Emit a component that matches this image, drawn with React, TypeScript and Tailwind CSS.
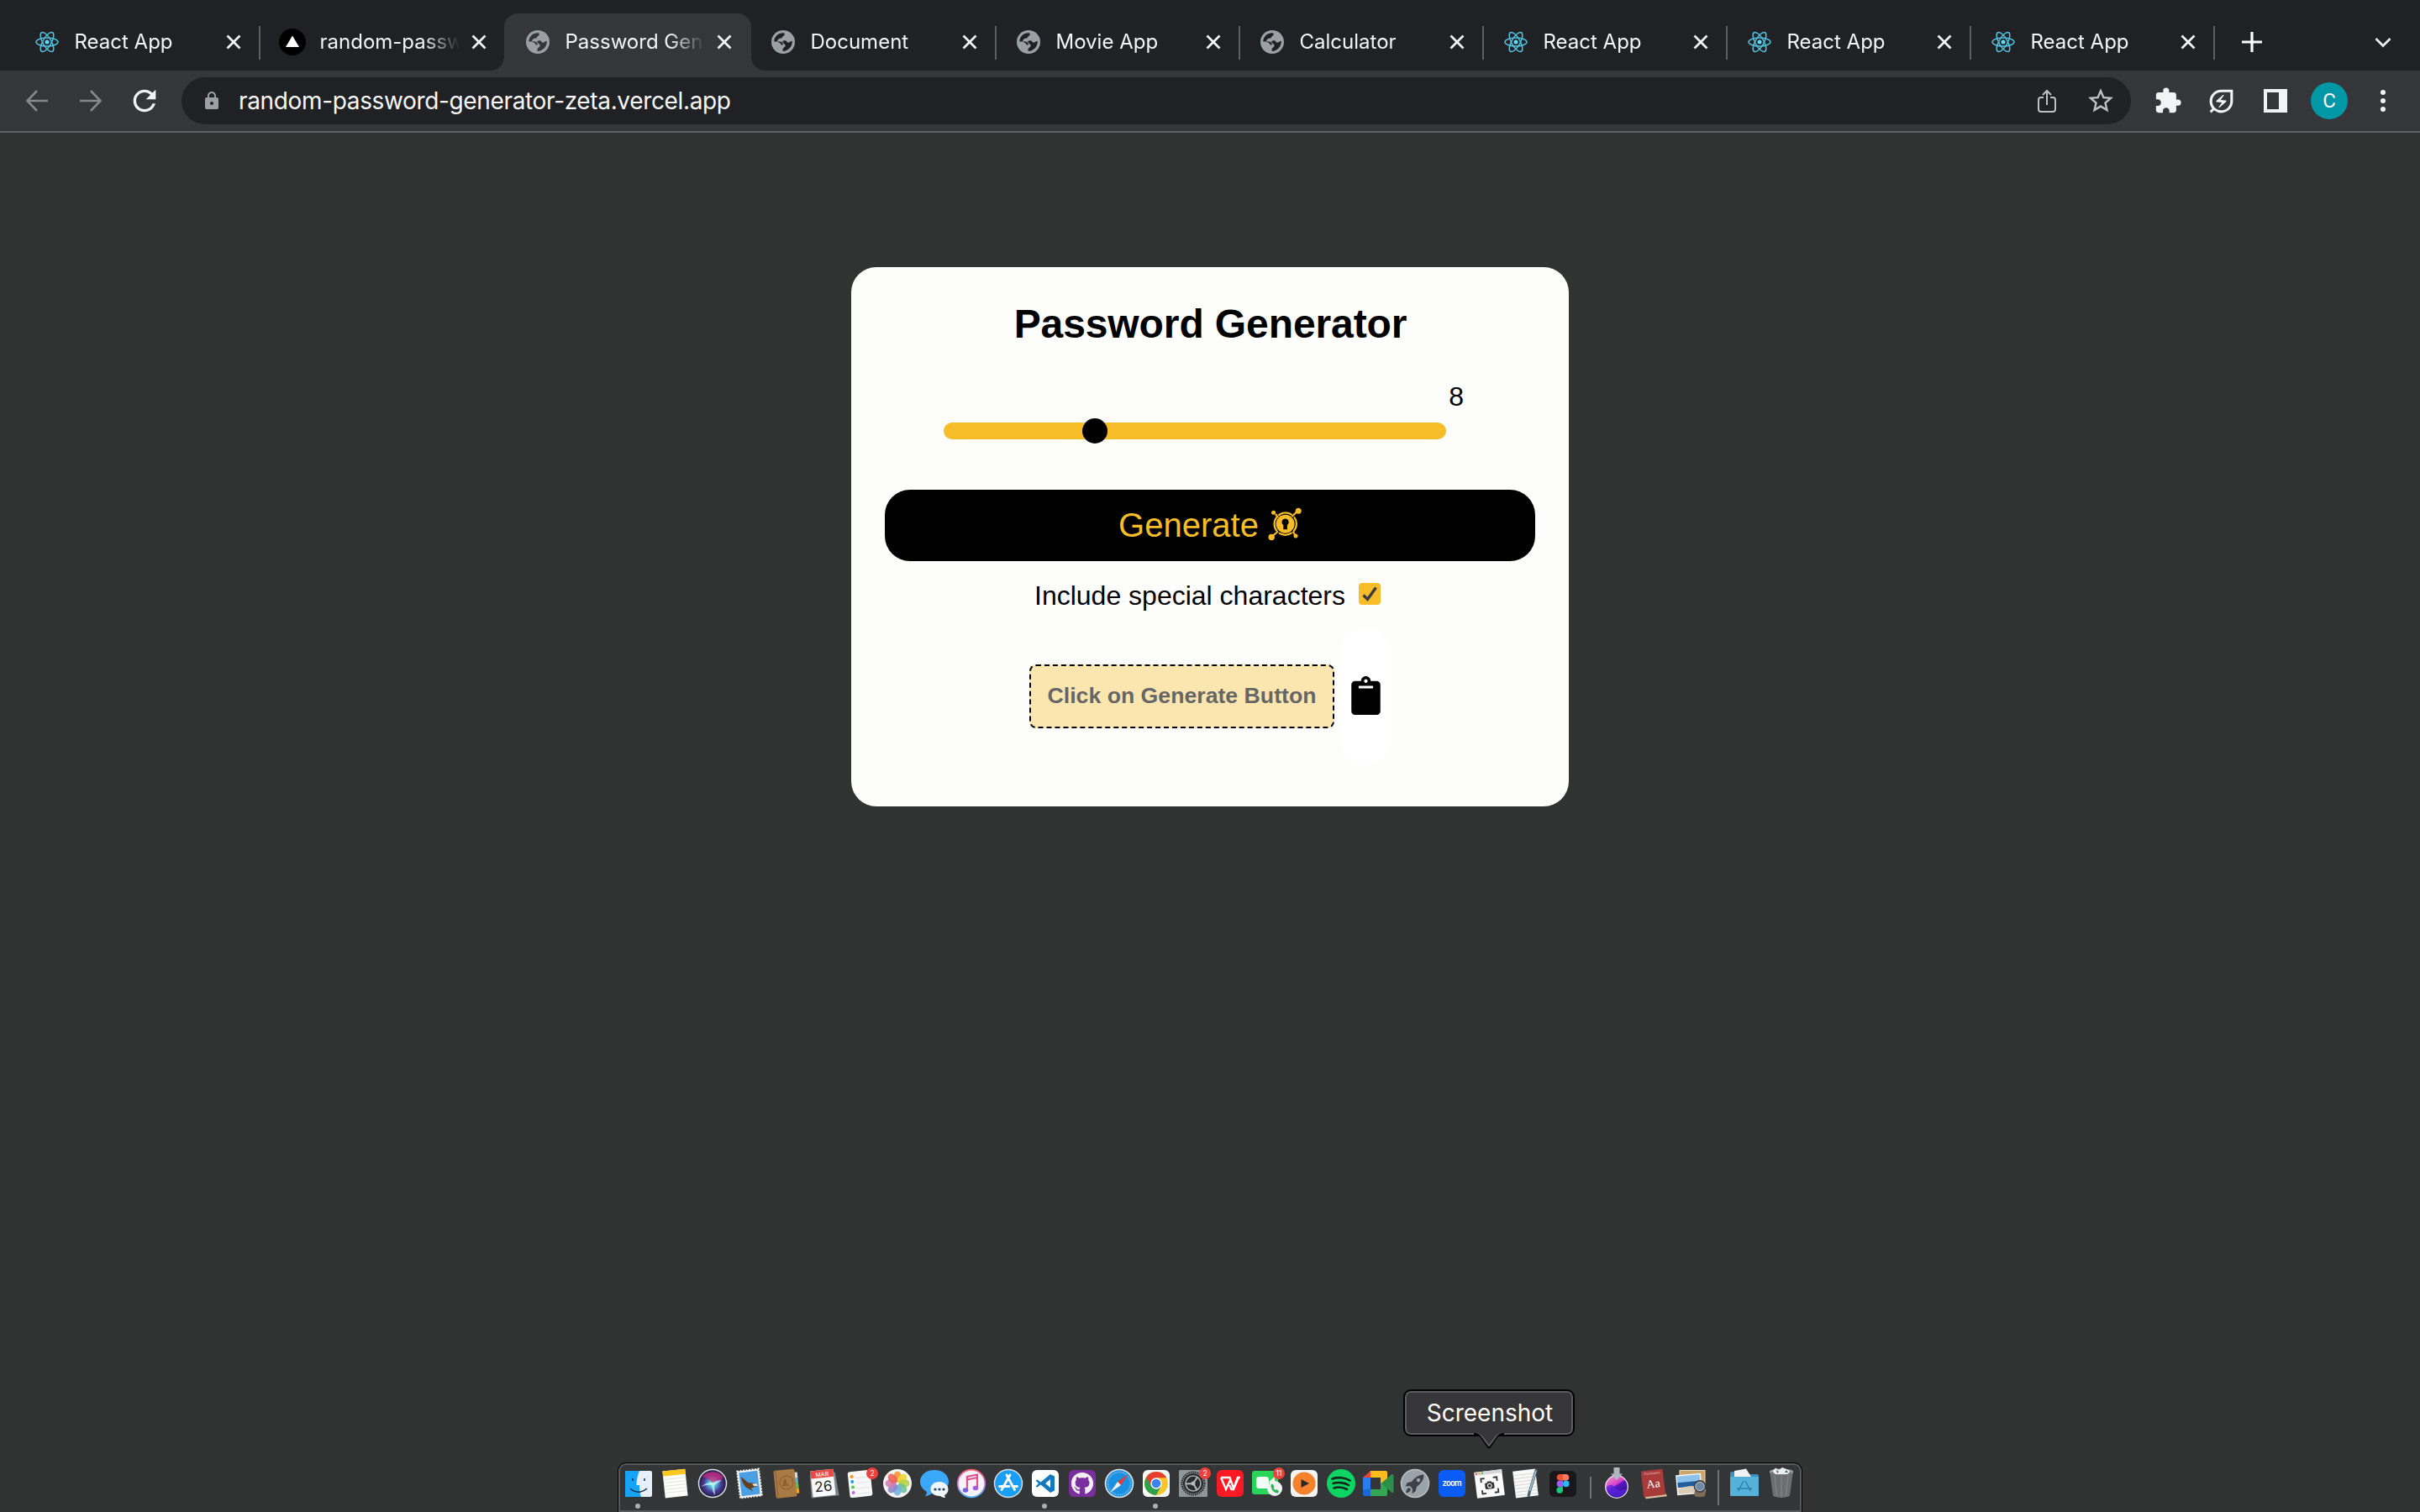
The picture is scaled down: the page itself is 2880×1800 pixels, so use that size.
import type { ReactNode } from "react";
import {
  MdExtension,
  MdLock,
  MdOutlineEnergySavingsLeaf,
  MdRefresh,
  MdStarBorder,
} from "react-icons/md";
import { FaGithub } from "react-icons/fa";

const UI = "font-['Inter',sans-serif]";

/* ---------- Browser chrome ---------- */

function ReactIcon() {
  return (
    <svg viewBox="0 0 28 28" className="h-7 w-7" fill="none" stroke="#53c1de" strokeWidth="1.5">
      <ellipse cx="14" cy="14" rx="13" ry="5" />
      <ellipse cx="14" cy="14" rx="13" ry="5" transform="rotate(60 14 14)" />
      <ellipse cx="14" cy="14" rx="13" ry="5" transform="rotate(120 14 14)" />
      <circle cx="14" cy="14" r="2.5" fill="#61dafb" stroke="none" />
    </svg>
  );
}

function VercelIcon() {
  return (
    <svg viewBox="0 0 32 32" className="-mx-0.5 h-8 w-8">
      <circle cx="16" cy="16" r="16" fill="#000" />
      <path d="M16 8.5 24 22H8z" fill="#fff" />
    </svg>
  );
}

function GlobeIcon({ hole }: { hole: string }) {
  return (
    <svg viewBox="0 0 28 28" className="h-7 w-7">
      <circle cx="14" cy="14" r="14" fill="#9aa0a6" />
      <path
        d="M15 3.200C9 2.600 3.600 6.800 3.200 13.500H9.500C12.500 13.500 13.800 15 13.800 17.500 13 17.600 12 17.500 11.500 17.200 11 15.500 10.500 15 9 14.800L7 13.500C7.500 10.500 9 9.800 11.500 9.600 13.200 9.400 13 7.500 14 7 15.500 6.300 16.500 5 15 3.200Z"
        fill={hole}
      />
      <path
        d="M24.900 13.200C24.800 19.500 20 24.700 13.600 25V22.300C13.600 21 16.800 20.500 16.600 18 16.500 16 14.500 16.500 13.500 14.500 12.500 12.500 15 11.800 17.200 12.400 18.500 13 18.500 14.600 20 14.800 21.500 15 23 12.600 24.900 13.200Z"
        fill={hole}
      />
    </svg>
  );
}

function CloseIcon() {
  return (
    <svg viewBox="0 0 20 20" className="h-5 w-5" stroke="#f5f6f7" strokeWidth="2.7">
      <path d="M2.500 2.500 17.500 17.500M17.500 2.500 2.500 17.500" />
    </svg>
  );
}

type TabData = {
  title: string;
  icon: "react" | "vercel" | "globe";
  wide?: boolean;
  active?: boolean;
  line?: boolean;
};

const tabs: TabData[] = [
  { title: "React App", icon: "react", wide: true },
  { title: "random-passw", icon: "vercel", wide: true, line: true },
  { title: "Password Gene", icon: "globe", active: true },
  { title: "Document", icon: "globe", wide: true },
  { title: "Movie App", icon: "globe", line: true },
  { title: "Calculator", icon: "globe", line: true },
  { title: "React App", icon: "react", line: true },
  { title: "React App", icon: "react", line: true },
  { title: "React App", icon: "react", line: true },
];

function Tab({ tab }: { tab: TabData }) {
  return (
    <div
      className={`relative flex h-[68px] shrink-0 items-center pl-[26px] ${
        tab.active
          ? "z-10 -mr-0.5 w-[294px] rounded-t-2xl bg-[#35363a] pr-[22px] before:absolute before:bottom-0 before:-left-4 before:h-4 before:w-4 before:bg-[radial-gradient(circle_at_0_0,transparent_15.5px,#35363a_16px)] after:absolute after:-right-4 after:bottom-0 after:h-4 after:w-4 after:bg-[radial-gradient(circle_at_100%_0,transparent_15.5px,#35363a_16px)]"
          : tab.wide
            ? "w-[292px] pr-5"
            : "w-[290px] pr-5"
      }`}
    >
      {tab.line && <span className="absolute top-[15px] left-0 h-10 w-0.5 bg-[#5b5e63]" />}
      {tab.icon === "react" && <ReactIcon />}
      {tab.icon === "vercel" && <VercelIcon />}
      {tab.icon === "globe" && <GlobeIcon hole={tab.active ? "#35363a" : "#202124"} />}
      <span className="ml-[18.5px] w-0 flex-1 [mask-image:linear-gradient(to_right,#000_122px,transparent_166px)] text-2xl whitespace-nowrap text-[#f3f4f5]">
        {tab.title}
      </span>
      <span className="ml-3">
        <CloseIcon />
      </span>
    </div>
  );
}

function TabStrip() {
  return (
    <div className="flex h-[84px] items-end bg-[#202124] pl-4">
      {tabs.map((tab, i) => (
        <Tab key={i} tab={tab} />
      ))}
      <div className="relative flex h-[68px] flex-1 items-center justify-between pr-[34px] pl-[34px]">
        <span className="absolute top-[15px] left-0 h-10 w-0.5 bg-[#5b5e63]" />
        <svg viewBox="0 0 24 24" className="h-6 w-6" stroke="#fff" strokeWidth="3.2">
          <path d="M12 0V24M0 12H24" />
        </svg>
        <svg viewBox="0 0 20 20" className="h-5 w-5" fill="none" stroke="#e8eaed" strokeWidth="2.8">
          <path d="M1.500 6 10 14.500 18.500 6" />
        </svg>
      </div>
    </div>
  );
}

function Toolbar() {
  return (
    <div className="flex h-[74px] items-center border-b-2 border-[#5e5f62] bg-[#35363a] pl-[30px]">
      <svg viewBox="0 0 28 28" className="h-7 w-7" fill="none" stroke="#87888b" strokeWidth="2.6">
        <path d="M27 14H3M14 2 2.500 14 14 26" />
      </svg>
      <svg viewBox="0 0 28 28" className="ml-9 h-7 w-7" fill="none" stroke="#87888b" strokeWidth="2.600">
        <path d="M1 14H25M14 2 25.500 14 14 26" />
      </svg>
      <MdRefresh className="ml-[30px] h-10 w-10 text-[#f1f3f4]" />
      <div className="ml-6 flex h-14 w-[2320px] items-center rounded-full bg-[#202124] pr-4 pl-6">
        <MdLock className="h-6 w-6 text-[#9aa0a6]" />
        <span className="ml-5 flex-1 text-[28px] leading-none tracking-[-0.35px] text-[#f7f8f9]">
          random-password-generator-zeta.vercel.app
        </span>
        <svg viewBox="0 0 24 30" className="h-[30px] w-6" fill="none" stroke="#bdc1c4" strokeWidth="2">
          <path d="M8 11H5Q2 11 2 14V25Q2 28 5 28H19Q22 28 22 25V14Q22 11 19 11H16M12 20V3M7 8 12 3 17 8" />
        </svg>
        <MdStarBorder className="mr-0.5 ml-[34px] h-9 w-9 text-[#bdc1c4]" />
      </div>
      <MdExtension className="ml-[27px] h-[34px] w-[34px] text-[#f1f3f4]" />
      <MdOutlineEnergySavingsLeaf className="ml-7 h-[37px] w-[37px] text-[#f1f3f4]" />
      <svg viewBox="0 0 28 28" className="ml-8 h-7 w-7">
        <path d="M0 0H28V28H0zM4 4V24H18V4z" fill="#f1f3f4" fillRule="evenodd" />
      </svg>
      <span className="ml-7 flex h-11 w-11 items-center justify-center rounded-full bg-[#0097a7] font-['Roboto',sans-serif] text-2xl text-white">
        C
      </span>
      <span className="ml-[39px] flex flex-col gap-1">
        <i className="h-1.5 w-1.5 rounded-full bg-[#f1f3f4]" />
        <i className="h-1.5 w-1.5 rounded-full bg-[#f1f3f4]" />
        <i className="h-1.5 w-1.5 rounded-full bg-[#f1f3f4]" />
      </span>
    </div>
  );
}

/* ---------- Page card ---------- */

function KeyholeIcon() {
  return (
    <svg viewBox="0 0 40 40" className="h-10 w-10" fill="#f7bd29">
      <g stroke="#f7bd29" strokeWidth="2.200" fill="none">
        <path d="M9 8 12 12M34 5.500 28.500 11M5 34.500 12 28.500M29.500 28.500 32.500 33.500" />
        <path d="M12.300 9.600A13.200 13.200 0 0 1 28.600 9M31 11.400A13.200 13.200 0 0 1 30.500 28.500M28.500 30.200A13.200 13.200 0 0 1 13 30.400M10.600 28.300A13.200 13.200 0 0 1 10.600 11.400" />
      </g>
      <circle cx="6.600" cy="6.200" r="2.500" />
      <circle cx="36.200" cy="4.200" r="3.500" />
      <circle cx="4.200" cy="35.500" r="3.700" />
      <circle cx="33" cy="34" r="2.500" />
      <circle cx="20.600" cy="19.800" r="11" />
      <path d="M20.600 13.600a4 4 0 0 1 2.300 7.300V26.200h-4.600V20.900a4 4 0 0 1 2.300-7.300z" fill="#000" />
    </svg>
  );
}

function Card() {
  return (
    <div className="flex h-[642px] w-[854px] flex-col items-center rounded-[30px] bg-[#fdfdfb] pt-10 font-['Liberation_Sans',Arial,sans-serif] text-black">
      <h1 className="pl-px text-[48px] leading-[56px] font-bold tracking-[-0.1px]">Password Generator</h1>
      <div className="mt-10 ml-[110px] w-[598px] self-start">
        <div className="-mr-[21px] text-right text-[32px] leading-9">8</div>
        <div className="mt-[13px] flex h-5 items-center rounded-full bg-[#f7bd29] pl-[165px]">
          <span className="h-[30px] w-[30px] rounded-full bg-black" />
        </div>
      </div>
      <button className="mt-[60px] flex h-[85px] w-[774px] items-center justify-center gap-[11px] rounded-[30px] bg-black pb-[3px] text-[40px] leading-none text-[#f7bd29]">
        <span className="pt-px">Generate</span>
        <KeyholeIcon />
      </button>
      <div className="mt-[23px] flex h-9 items-start self-start pl-[218px] text-[32px] leading-9">
        <span>Include special characters</span>
        <svg viewBox="0 0 26 26" className="mt-[3px] ml-4 h-[26px] w-[26px]">
          <rect width="26" height="26" rx="4" fill="#f7bd29" />
          <path d="M5.500 14.500 10.500 19.500 20.500 5.500" fill="none" stroke="#3b3b3b" strokeWidth="3.400" />
        </svg>
      </div>
      <div className="mt-5 flex items-center gap-2">
        <div className="flex h-[76px] w-[363px] items-center justify-center rounded-lg border-2 border-dashed border-black bg-[#fce6b0] text-[26.670px] leading-none font-bold text-[#666]">
          <span className="pb-0.5 pl-px">Click on Generate Button</span>
        </div>
        <div className="flex h-[164px] w-[60px] items-center justify-center rounded-[30px] bg-white pb-0.5">
          <svg viewBox="0 0 384 512" className="h-[46px] w-[35px]">
            <path d="M384 112v352c0 26.510-21.490 48-48 48H48c-26.510 0-48-21.490-48-48V112c0-26.510 21.490-48 48-48h80c0-35.290 28.710-64 64-64s64 28.710 64 64h80c26.510 0 48 21.490 48 48zM192 40c-13.255 0-24 10.745-24 24s10.745 24 24 24 24-10.745 24-24-10.745-24-24-24m96 114v-20a6 6 0 0 0-6-6H102a6 6 0 0 0-6 6v20a6 6 0 0 0 6 6h180a6 6 0 0 0 6-6z" />
          </svg>
        </div>
      </div>
    </div>
  );
}

/* ---------- Dock ---------- */

function Art({ children }: { children: ReactNode }) {
  return (
    <svg viewBox="0 0 36 36" className="h-9 w-9 overflow-visible">
      {children}
    </svg>
  );
}

function Badge({ n }: { n: string }) {
  return (
    <g>
      <circle cx="32" cy="6" r="7" fill="#f0403a" />
      <text x="32" y="9" textAnchor="middle" fontSize="8.500" fill="#fff" fontFamily="Inter, sans-serif">
        {n}
      </text>
    </g>
  );
}

type DockItem = { name: string; dot?: boolean; art: ReactNode };

const petals = ["#f7962a", "#ecd735", "#b5d143", "#6fc196", "#6fb2e4", "#8d84c9", "#cf7db4", "#f0605a"];

const apps: DockItem[] = [
  {
    name: "Finder",
    dot: true,
    art: (
      <>
        <rect x="2" y="3" width="32" height="31" rx="2" fill="#e6effa" />
        <path d="M4 3H19C16.500 9 15.500 14 15.500 20H19C19 25 19.500 30 21 34H4Q2 34 2 32V5Q2 3 4 3Z" fill="#16a4f8" />
        <path d="M11 12V15M25 12V15M8 24C14 29.500 22 29.500 28 24" fill="none" stroke="#122a4a" strokeWidth="1.500" />
      </>
    ),
  },
  {
    name: "Notes",
    art: (
      <g transform="rotate(-6 18 18)">
        <rect x="4" y="2" width="27" height="32" fill="#fdfdfa" />
        <rect x="4" y="2" width="27" height="6" fill="#fcc81e" />
        <path d="M4 12H31M4 16H31M4 20H31M4 24H31M4 28H31" stroke="#dddddb" strokeWidth=".8" />
      </g>
    ),
  },
  {
    name: "Siri",
    art: (
      <>
        <defs>
          <radialGradient id="siri">
            <stop offset="0" stopColor="#f4ffff" />
            <stop offset=".25" stopColor="#57c3dd" />
            <stop offset=".6" stopColor="#4b3f9a" />
            <stop offset="1" stopColor="#20173f" />
          </radialGradient>
        </defs>
        <circle cx="18" cy="18" r="16.500" fill="url(#siri)" stroke="#dcdce2" strokeWidth="1.500" />
        <path d="M6 10C11 3 24 2 30 9 32 13 26 14 18 18 14 12 9 11 6 10Z" fill="#d3277b" opacity=".7" />
        <path d="M4 22Q12 16 18 17 23 14 29 14 24 18 20 20L21 32Q17 27 17.500 20 11 19 4 22Z" fill="#b9f6f4" opacity=".75" />
      </>
    ),
  },
  {
    name: "Mail",
    art: (
      <g transform="rotate(-7 18 18)">
        <rect x="5" y="2" width="26" height="32" fill="#f2f2ee" stroke="#f2f2ee" strokeWidth="2" strokeDasharray="2 1.500" />
        <rect x="7" y="4" width="22" height="28" fill="#4b9fe4" />
        <path d="M9 9C12 11 14 15 17 17L26 19 28 22 19 24 21 28 16 24C11 21 9 15 9 9Z" fill="#65401f" />
        <path d="M21 19 26 19 28 22 23 22Z" fill="#efe6d2" />
      </g>
    ),
  },
  {
    name: "Contacts",
    art: (
      <g transform="rotate(-6 18 18)">
        <rect x="27" y="6" width="5" height="7" fill="#dedede" />
        <rect x="27" y="13" width="5" height="6" fill="#58b5e8" />
        <rect x="27" y="19" width="5" height="6" fill="#66c04c" />
        <rect x="27" y="25" width="5" height="6" fill="#f4a428" />
        <rect x="4" y="1.500" width="25" height="33" rx="2" fill="#a97a43" />
        <path d="M6.500 2V34" stroke="#8f6432" strokeWidth="1.200" />
        <circle cx="18" cy="17" r="8" fill="none" stroke="#8b6232" strokeWidth="1.200" />
        <path d="M12 21Q15 18 15 14 18 11 18.500 14L18 18 22 21Z" fill="#8b6232" />
      </g>
    ),
  },
  {
    name: "Calendar",
    art: (
      <g transform="rotate(-6 18 18)">
        <path d="M3 6H33L35 34H2Z" fill="#7b8790" />
        <rect x="4" y="2" width="27" height="31" fill="#fbfbfb" />
        <rect x="4" y="2" width="27" height="9" fill="#ea4a43" />
        <text x="17.500" y="9.500" textAnchor="middle" fontSize="7" fill="#fff" fontFamily="Inter, sans-serif">
          MAR
        </text>
        <text x="17.500" y="27.500" textAnchor="middle" fontSize="17" fill="#222" fontFamily="Inter, sans-serif">
          26
        </text>
      </g>
    ),
  },
  {
    name: "Reminders",
    art: (
      <>
        <g transform="rotate(-6 18 18)">
          <rect x="4" y="3" width="27" height="31" rx="3" fill="#f8f8f8" />
          <circle cx="8.500" cy="9" r="2" fill="#fd8f1e" />
          <circle cx="8.500" cy="15" r="2" fill="#1fa0f6" />
          <circle cx="8.500" cy="21.500" r="2" fill="#4fcf4c" />
          <circle cx="8.500" cy="28" r="2" fill="#c36ae0" />
          <path d="M13 11H29M13 17H29M13 23.500H29M13 30H29" stroke="#dedede" strokeWidth=".8" />
        </g>
        <Badge n="2" />
      </>
    ),
  },
  {
    name: "Photos",
    art: (
      <>
        <circle cx="18" cy="18" r="17" fill="#f4f4f2" />
        {petals.map((c, i) => (
          <ellipse key={c} cx="18" cy="10" rx="4.800" ry="6.500" fill={c} opacity=".88" transform={`rotate(${i * 45} 18 18)`} />
        ))}
      </>
    ),
  },
  {
    name: "Messages",
    art: (
      <>
        <path d="M18 2C8 2 1 8 1 16 1 21 4 25 9 28 9 30 8 32 6.500 33 11 33 14 31 15 29.500 27 31 35 24 35 16 35 8 28 2 18 2Z" fill="#3ba7f8" />
        <path d="M24 16C17 16 13.500 20 13.500 25S18 33 25 33C27 34.500 29 35 31 35L30 32C33 30.500 34.500 28 34.500 25 34.500 20 30 16 24 16Z" fill="#eff6fc" />
        <g fill="#24456b">
          <circle cx="19" cy="25" r="1.600" />
          <circle cx="24" cy="25" r="1.600" />
          <circle cx="29" cy="25" r="1.600" />
        </g>
      </>
    ),
  },
  {
    name: "Music",
    art: (
      <>
        <defs>
          <linearGradient id="music" x1="0" y1="0" x2="0" y2="1">
            <stop offset="0" stopColor="#fa5a68" />
            <stop offset=".5" stopColor="#c66be6" />
            <stop offset="1" stopColor="#45b1f5" />
          </linearGradient>
        </defs>
        <circle cx="18" cy="18" r="16.300" fill="#f7f2f8" stroke="url(#music)" strokeWidth="1.800" />
        <path d="M13 26V10L25 7.500V23.500M13 13.500 25 11" fill="none" stroke="#e0508d" strokeWidth="2.200" />
        <ellipse cx="11" cy="26" rx="3.300" ry="2.700" fill="#6b62e8" />
        <ellipse cx="23" cy="23.500" rx="3.300" ry="2.700" fill="#a95be0" />
      </>
    ),
  },
  {
    name: "App Store",
    art: (
      <>
        <circle cx="18" cy="18" r="16.500" fill="#189ff5" stroke="#d5dde4" strokeWidth="1.500" />
        <path d="M16 8 25.500 25.500M20 8 10 25.500M7.500 21.500H19M23.500 21.500H28.500" stroke="#fff" strokeWidth="2.800" strokeLinecap="round" />
      </>
    ),
  },
  {
    name: "VS Code",
    dot: true,
    art: (
      <>
        <rect x="2" y="2" width="32" height="32" rx="6" fill="#fff" />
        <path d="M24 7 29 9.500V26.500L24 29 12.500 19.500 8.500 22.500 6.500 21.500 10 18 6.500 14.500 8.500 13.500 12.500 16.500ZM24 13 18 18 24 23Z" fill="#1279bd" fillRule="evenodd" />
      </>
    ),
  },
  {
    name: "GitHub Desktop",
    art: (
      <>
        <rect x="2" y="2" width="32" height="32" rx="6" fill="#7b2f9f" />
        <FaGithub x="4.500" y="4.500" size={27} color="#f3f0f6" />
      </>
    ),
  },
  {
    name: "Safari",
    art: (
      <>
        <circle cx="18" cy="18" r="16.500" fill="#1b8fe0" stroke="#dfe3e6" strokeWidth="1.600" />
        <circle cx="18" cy="18" r="13.500" fill="none" stroke="#9ed3f5" strokeWidth="2" strokeDasharray=".7 1.400" />
        <path d="M29 7 20 20 16 16Z" fill="#e83b37" />
        <path d="M7 29 16 16 20 20Z" fill="#f1efec" />
      </>
    ),
  },
  {
    name: "Chrome",
    dot: true,
    art: (
      <>
        <rect x="2" y="2" width="32" height="32" rx="6" fill="#fafafa" />
        <circle cx="18" cy="18" r="14" fill="#fbc62d" />
        <path d="M5.900 11A14 14 0 0 0 18 32L23.800 21.300 18 18Z" fill="#2da04d" />
        <path d="M5.900 11A14 14 0 0 1 30.300 11.300H18L12.200 21.300Z" fill="#e5402f" />
        <circle cx="18" cy="18" r="6.700" fill="#fff" />
        <circle cx="18" cy="18" r="5.300" fill="#3c82f0" />
      </>
    ),
  },
  {
    name: "System Preferences",
    art: (
      <>
        <rect x="1" y="2" width="34" height="32" rx="1.500" fill="#8f969b" />
        <circle cx="18" cy="18" r="13.500" fill="none" stroke="#202123" strokeWidth="2" strokeDasharray="1.500 1" />
        <circle cx="18" cy="18" r="12" fill="#292a2c" />
        <circle cx="18" cy="18" r="9" fill="none" stroke="#a8acaf" strokeWidth="1.600" />
        <path d="M18 18 10 14M18 18 26 14M18 18V27" stroke="#b6babd" strokeWidth="2" transform="rotate(-30 18 18)" />
        <circle cx="18" cy="18" r="2.500" fill="#b6babd" />
        <Badge n="2" />
      </>
    ),
  },
  {
    name: "WPS Office",
    art: (
      <>
        <rect x="2" y="2" width="32" height="32" rx="6" fill="#fb1a24" />
        <path d="M7 11H17.500L22 24 27 11H30M7 11 13 25 18 14M17 20 19.500 25H22L27.500 12" fill="none" stroke="#fff" strokeWidth="2.300" />
      </>
    ),
  },
  {
    name: "FaceTime",
    art: (
      <>
        <rect x="0" y="3" width="31" height="28" rx="3" fill="#28d45a" />
        <rect x="5" y="10" width="15" height="14" rx="3.500" fill="#f3f9f4" />
        <path d="M20 16 27 10V24Z" fill="#f3f9f4" />
        <circle cx="27" cy="24" r="9" fill="#f2f4f3" />
        <path d="M22.500 19.500 24.500 18.500 26.500 22 25.500 23.500 28 26 29.500 25 32 27 31 29.500C26.500 30 22 25 22.500 19.500Z" fill="#25b951" />
        <Badge n="11" />
      </>
    ),
  },
  {
    name: "Player",
    art: (
      <>
        <rect x="2" y="2" width="32" height="32" rx="6" fill="#f6f5f3" />
        <circle cx="18" cy="18" r="13.500" fill="#f8812b" />
        <path d="M14.500 13 24 18 14.500 23Z" fill="#2d2926" />
      </>
    ),
  },
  {
    name: "Spotify",
    art: (
      <>
        <circle cx="18" cy="18" r="17" fill="#0cd663" />
        <path d="M7.500 12.500C14 10 23 11 28.500 14.500M8.500 18C14 16 22 17 27 20M9.500 23.500C14 22 20 22.500 25 25" fill="none" stroke="#14251b" strokeWidth="2.600" strokeLinecap="round" />
      </>
    ),
  },
  {
    name: "Google Meet",
    art: (
      <>
        <path d="M0 11 9 3V11Z" fill="#ea4335" />
        <path d="M9 3H27Q29 3 29 5V18H21V11H9Z" fill="#fcbc1c" />
        <path d="M0 11H9V25H0Z" fill="#2a7bee" />
        <path d="M0 25H9V33H2Q0 33 0 31Z" fill="#1967d2" />
        <path d="M9 25H21V18H29V31Q29 33 27 33H9Z" fill="#35a754" />
        <path d="M21.500 18 34.500 7Q36.500 6.500 36.500 8.500V27.500Q36.500 30 34.500 29Z" fill="#2b8f4a" />
      </>
    ),
  },
  {
    name: "Launchpad",
    art: (
      <>
        <circle cx="18" cy="18" r="16.500" fill="#9aa3aa" stroke="#bac1c6" strokeWidth="1.500" />
        <path d="M28.500 7.500C21 8 17 12 14 16L9 17 6.500 21.500 12 21 15 24.500 14.500 30 18.500 27.500 20 22C25 18 28.500 14 28.500 7.500Z" fill="#3c4247" />
        <circle cx="22" cy="14" r="2.200" fill="#9aa3aa" />
        <path d="M11 23C8 24 7 27 7.500 29.500 10 29 12.500 27.500 13 25Z" fill="#3c4247" />
      </>
    ),
  },
  {
    name: "Zoom",
    art: (
      <>
        <rect x="2" y="2" width="32" height="32" rx="6" fill="#0b5cf4" />
        <text x="18" y="20.500" textAnchor="middle" fontSize="9.500" fontWeight="600" fill="#fff" fontFamily="Inter, sans-serif" textLength="23">
          zoom
        </text>
      </>
    ),
  },
  {
    name: "Screenshot",
    art: (
      <g transform="rotate(-7 18 18)">
        <rect x="2" y="3" width="33" height="31" fill="#fbfbfb" />
        <rect x="2" y="3" width="33" height="4" fill="#d6d6d6" />
        <circle cx="4.500" cy="5" r="1.100" fill="#f0524a" />
        <circle cx="8" cy="5" r="1.100" fill="#f3b63c" />
        <circle cx="11.500" cy="5" r="1.100" fill="#4dc04b" />
        <path d="M9 16V11.500H13.500M23.500 11.500H28V16M28 25V29.500H23.500M13.500 29.500H9V25" fill="none" stroke="#333" strokeWidth="1.800" />
        <rect x="13" y="17" width="11" height="7.500" rx="1.500" fill="#333" />
        <rect x="16" y="15.500" width="5" height="3" fill="#333" />
        <circle cx="18.500" cy="20.700" r="2.400" fill="#333" stroke="#fff" strokeWidth="1" />
      </g>
    ),
  },
  {
    name: "TextEdit",
    art: (
      <>
        <g transform="rotate(-7 18 18)">
          <rect x="4" y="2" width="27" height="32" fill="#f9f9f7" />
          <path d="M4 7H31M4 11H31M4 15H31M4 19H31M4 23H31M4 27H31M4 31H31" stroke="#d2d2d2" strokeWidth=".8" />
        </g>
        <path d="M30.500 1 22 29 21 34" stroke="#4a6473" strokeWidth="3.200" fill="none" />
        <path d="M30 3 22.500 27" stroke="#a9c4d4" strokeWidth="1.500" />
      </>
    ),
  },
  {
    name: "Figma",
    art: (
      <>
        <rect x="2" y="3" width="32" height="31" rx="6" fill="#18181a" />
        <path d="M18 7H14.500a3.800 3.800 0 0 0 0 7.600H18Z" fill="#f4512c" />
        <path d="M18 7H21.500a3.800 3.800 0 0 1 0 7.600H18Z" fill="#ff7864" />
        <path d="M18 14.600H14.500a3.800 3.800 0 0 0 0 7.600H18Z" fill="#a259ff" />
        <circle cx="21.800" cy="18.400" r="3.800" fill="#27b9fa" />
        <path d="M18 22.200H14.500a3.800 3.800 0 1 0 3.500 3.800Z" fill="#12c97c" />
      </>
    ),
  },
];

const recent: DockItem[] = [
  {
    name: "macOS installer",
    art: (
      <>
        <defs>
          <linearGradient id="monterey" x1="0" y1="0" x2=".6" y2="1">
            <stop offset="0" stopColor="#f4a3c8" />
            <stop offset=".5" stopColor="#d43ccb" />
            <stop offset=".55" stopColor="#5a18c8" />
            <stop offset="1" stopColor="#2b0d7c" />
          </linearGradient>
        </defs>
        <circle cx="18" cy="22" r="13.300" fill="url(#monterey)" stroke="#ebe6f1" strokeWidth="1.300" />
        <path d="M5.500 23C10 18 14 19 18 25 22 28 26 24 30 25 27 36 10 38 5.500 23Z" fill="#5722dc" opacity=".8" />
        <path d="M14.500-1H21.500V6.500H25L18 14 11 6.500H14.500Z" fill="#adb9bf" />
      </>
    ),
  },
  {
    name: "Dictionary",
    art: (
      <g transform="rotate(-7 18 18)">
        <path d="M5 32H31L32 35H7Z" fill="#d7c4a5" />
        <rect x="4.500" y="2" width="26" height="31" rx="1.500" fill="#a93a3a" />
        <text x="17.500" y="7" textAnchor="middle" fontSize="4.500" fill="#ecc9c3" fontFamily="Liberation Serif, serif">
          Dictionary
        </text>
        <text x="17.500" y="23" textAnchor="middle" fontSize="14" fill="#fff" fontFamily="Liberation Serif, serif">
          Aa
        </text>
      </g>
    ),
  },
  {
    name: "Preview",
    art: (
      <>
        <rect x="5" y="2.500" width="30" height="26" fill="#caa66b" stroke="#e9dcc0" strokeWidth="1" />
        <g transform="rotate(-5 16 18)">
          <rect x="1" y="7" width="30" height="24" fill="#f4f4f2" />
          <rect x="2.500" y="8.500" width="27" height="9" fill="#8dc2ec" />
          <rect x="2.500" y="16" width="27" height="6" fill="#235c9c" />
          <path d="M2.500 24Q15 19 29.500 23V29.500H2.500Z" fill="#d9cdb8" />
        </g>
        <rect x="22.500" y="26" width="13" height="8" rx="3" fill="#7d6b57" />
        <circle cx="29" cy="21.500" r="6.500" fill="#6e8ba6" stroke="#3c4146" strokeWidth="1.800" />
        <circle cx="29" cy="21.500" r="5.200" fill="none" stroke="#c7cdd2" strokeWidth=".8" />
      </>
    ),
  },
];

const places: DockItem[] = [
  {
    name: "Applications",
    art: (
      <>
        <path d="M1 6Q1 4 3 4H10L13 7H33Q35 7 35 9V33H1Z" fill="#3c8fb8" />
        <path d="M6 3 20 .5 26 10H6Z" fill="#f0f1f2" />
        <rect x="1" y="10" width="34" height="23" rx="1" fill="#55b0da" />
        <path d="M19 15 25.500 27M17 15 10.500 27M9 24H27" stroke="#2e80aa" strokeWidth="1.500" />
      </>
    ),
  },
  {
    name: "Trash",
    art: (
      <>
        <path d="M4 3 8 33Q18 37 28 33L32 3Z" fill="#6b6e70" />
        <path d="M10 8 12.500 33M18 9V34M26 8 23.500 33" stroke="#7d8082" strokeWidth="1.600" />
        <ellipse cx="18" cy="4" rx="14" ry="3.600" fill="#a7a9aa" />
        <ellipse cx="18" cy="4.600" rx="12" ry="2.600" fill="#4a4d4f" />
        <path d="M7 4 11-.5 15 2 19-1 24 1 29 4 25 7H11Z" fill="#eceeed" />
        <path d="M12 2 15 4 13 6ZM24 2 26 5 22 5Z" fill="#3f6f70" />
      </>
    ),
  },
];

function DockIcon({ item }: { item: DockItem }) {
  return (
    <div className="relative flex w-11 justify-center pt-1.5" title={item.name}>
      <Art>{item.art}</Art>
      {item.dot && <span className="absolute top-12 left-[18px] h-1.5 w-1.5 rounded-full bg-[#adaeae]" />}
      {item.name === "Screenshot" && (
        <div className="absolute bottom-[90px] left-1/2 -translate-x-1/2">
          <div className="flex h-14 w-[204px] items-center justify-center rounded-[9px] border-2 border-black bg-[#363638] pl-0.5 text-[28px] leading-none text-white inset-ring-2 inset-ring-[#5c5c5e]">
            Screenshot
          </div>
          <svg viewBox="0 0 36 20" className="absolute -bottom-4 left-[84px] h-5 w-9">
            <path d="M0 0H36V2H34C30 2 29 4 27 7L20 17Q18 20 16 17L9 7C7 4 6 2 2 2H0Z" fill="#000" />
            <path d="M1 0H35C30 0 28 3 26 6L19 15.500Q18 17 17 15.500L10 6C8 3 6 0 1 0Z" fill="#5c5c5e" />
            <path d="M5 0H31C28 1 26 3 24.500 5L18 13.500 11.500 5C10 3 8 1 5 0Z" fill="#363638" />
          </svg>
        </div>
      )}
    </div>
  );
}

function Dock() {
  return (
    <div className="absolute bottom-0 left-[735px] flex h-[59px] w-[1410px] rounded-t-[10px] border-x border-t border-black bg-[#343537] pl-0.5 inset-ring-2 inset-ring-[#58595a]">
      <div className="flex">
        {apps.map((a) => (
          <DockIcon key={a.name} item={a} />
        ))}
      </div>
      <span className="mt-4 ml-2.5 h-[26px] w-0.5 bg-[#707173]" />
      <div className="ml-2 flex">
        {recent.map((a) => (
          <DockIcon key={a.name} item={a} />
        ))}
      </div>
      <span className="mt-2 ml-2.5 h-[42px] w-0.5 bg-[#707173]" />
      <div className="ml-2 flex">
        {places.map((a) => (
          <DockIcon key={a.name} item={a} />
        ))}
      </div>
    </div>
  );
}

export default function App() {
  return (
    <div className={`relative flex h-[1800px] w-[2880px] flex-col overflow-hidden bg-[#313332] ${UI}`}>
      <TabStrip />
      <Toolbar />
      <main className="flex flex-1 justify-center pt-[160px]">
        <Card />
      </main>
      <Dock />
    </div>
  );
}
